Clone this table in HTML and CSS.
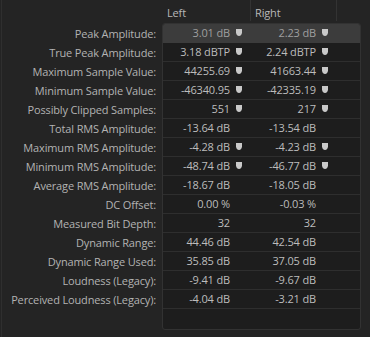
FILE: index.html
```html
<!DOCTYPE html>
<html>
<head>
<meta charset="utf-8">
<link rel="stylesheet" href="styles.css">
</head>
<body>
<div class="panel">
  <div class="header">
    <div class="hspacer"></div>
    <div class="hcell hleft">Left</div>
    <div class="hcell hright">Right</div>
  </div>
  <div class="main">
    <div class="labels">
      <div class="label">Peak Amplitude:</div>
      <div class="label">True Peak Amplitude:</div>
      <div class="label">Maximum Sample Value:</div>
      <div class="label">Minimum Sample Value:</div>
      <div class="label">Possibly Clipped Samples:</div>
      <div class="label">Total RMS Amplitude:</div>
      <div class="label">Maximum RMS Amplitude:</div>
      <div class="label">Minimum RMS Amplitude:</div>
      <div class="label">Average RMS Amplitude:</div>
      <div class="label">DC Offset:</div>
      <div class="label">Measured Bit Depth:</div>
      <div class="label">Dynamic Range:</div>
      <div class="label">Dynamic Range Used:</div>
      <div class="label">Loudness (Legacy):</div>
      <div class="label">Perceived Loudness (Legacy):</div>
    </div>
    <div class="box">
      <div class="row selected">
        <div class="cell c1"><span>3.01 dB</span><svg class="pin" viewBox="0 0 6 7"><path d="M0 0H6V3.4C6 5.3 4.6 7 3 7C1.4 7 0 5.3 0 3.4Z"/></svg></div>
        <div class="cell c2"><span>2.23 dB</span><svg class="pin" viewBox="0 0 6 7"><path d="M0 0H6V3.4C6 5.3 4.6 7 3 7C1.4 7 0 5.3 0 3.4Z"/></svg></div>
      </div>
      <div class="row">
        <div class="cell c1"><span>3.18 dBTP</span><svg class="pin" viewBox="0 0 6 7"><path d="M0 0H6V3.4C6 5.3 4.6 7 3 7C1.4 7 0 5.3 0 3.4Z"/></svg></div>
        <div class="cell c2"><span>2.24 dBTP</span><svg class="pin" viewBox="0 0 6 7"><path d="M0 0H6V3.4C6 5.3 4.6 7 3 7C1.4 7 0 5.3 0 3.4Z"/></svg></div>
      </div>
      <div class="row">
        <div class="cell c1"><span>44255.69</span><svg class="pin" viewBox="0 0 6 7"><path d="M0 0H6V3.4C6 5.3 4.6 7 3 7C1.4 7 0 5.3 0 3.4Z"/></svg></div>
        <div class="cell c2"><span>41663.44</span><svg class="pin" viewBox="0 0 6 7"><path d="M0 0H6V3.4C6 5.3 4.6 7 3 7C1.4 7 0 5.3 0 3.4Z"/></svg></div>
      </div>
      <div class="row">
        <div class="cell c1"><span>-46340.95</span><svg class="pin" viewBox="0 0 6 7"><path d="M0 0H6V3.4C6 5.3 4.6 7 3 7C1.4 7 0 5.3 0 3.4Z"/></svg></div>
        <div class="cell c2"><span>-42335.19</span><svg class="pin" viewBox="0 0 6 7"><path d="M0 0H6V3.4C6 5.3 4.6 7 3 7C1.4 7 0 5.3 0 3.4Z"/></svg></div>
      </div>
      <div class="row">
        <div class="cell c1"><span>551</span><svg class="pin" viewBox="0 0 6 7"><path d="M0 0H6V3.4C6 5.3 4.6 7 3 7C1.4 7 0 5.3 0 3.4Z"/></svg></div>
        <div class="cell c2"><span>217</span><svg class="pin" viewBox="0 0 6 7"><path d="M0 0H6V3.4C6 5.3 4.6 7 3 7C1.4 7 0 5.3 0 3.4Z"/></svg></div>
      </div>
      <div class="row">
        <div class="cell c1"><span>-13.64 dB</span><span class="gap"></span></div>
        <div class="cell c2"><span>-13.54 dB</span><span class="gap"></span></div>
      </div>
      <div class="row">
        <div class="cell c1"><span>-4.28 dB</span><svg class="pin" viewBox="0 0 6 7"><path d="M0 0H6V3.4C6 5.3 4.6 7 3 7C1.4 7 0 5.3 0 3.4Z"/></svg></div>
        <div class="cell c2"><span>-4.23 dB</span><svg class="pin" viewBox="0 0 6 7"><path d="M0 0H6V3.4C6 5.3 4.6 7 3 7C1.4 7 0 5.3 0 3.4Z"/></svg></div>
      </div>
      <div class="row">
        <div class="cell c1"><span>-48.74 dB</span><svg class="pin" viewBox="0 0 6 7"><path d="M0 0H6V3.4C6 5.3 4.6 7 3 7C1.4 7 0 5.3 0 3.4Z"/></svg></div>
        <div class="cell c2"><span>-46.77 dB</span><svg class="pin" viewBox="0 0 6 7"><path d="M0 0H6V3.4C6 5.3 4.6 7 3 7C1.4 7 0 5.3 0 3.4Z"/></svg></div>
      </div>
      <div class="row">
        <div class="cell c1"><span>-18.67 dB</span><span class="gap"></span></div>
        <div class="cell c2"><span>-18.05 dB</span><span class="gap"></span></div>
      </div>
      <div class="row">
        <div class="cell c1"><span>0.00 %</span><span class="gap"></span></div>
        <div class="cell c2"><span>-0.03 %</span><span class="gap"></span></div>
      </div>
      <div class="row">
        <div class="cell c1"><span>32</span><span class="gap"></span></div>
        <div class="cell c2"><span>32</span><span class="gap"></span></div>
      </div>
      <div class="row">
        <div class="cell c1"><span>44.46 dB</span><span class="gap"></span></div>
        <div class="cell c2"><span>42.54 dB</span><span class="gap"></span></div>
      </div>
      <div class="row">
        <div class="cell c1"><span>35.85 dB</span><span class="gap"></span></div>
        <div class="cell c2"><span>37.05 dB</span><span class="gap"></span></div>
      </div>
      <div class="row">
        <div class="cell c1"><span>-9.41 dB</span><span class="gap"></span></div>
        <div class="cell c2"><span>-9.67 dB</span><span class="gap"></span></div>
      </div>
      <div class="row">
        <div class="cell c1"><span>-4.04 dB</span><span class="gap"></span></div>
        <div class="cell c2"><span>-3.21 dB</span><span class="gap"></span></div>
      </div>
    </div>
  </div>
</div>
</body>
</html>
```
FILE: styles.css
```css
html, body {
  margin: 0;
  padding: 0;
  background: #242424;
}
body {
  width: 370px;
  height: 337px;
  overflow: hidden;
  font-family: "Open Sans", "Noto Sans", sans-serif;
  font-size: 11px;
  letter-spacing: -0.15px;
  color: #b4b4b4;
}
.panel {
  height: 337px;
  border-left: 1px solid #2f2f2f;
  margin-left: 1px;
  box-sizing: border-box;
}
.header {
  display: flex;
  height: 23px;
}
.hspacer {
  width: 161px;
}
.hcell {
  height: 21px;
  line-height: 26px;
  box-sizing: border-box;
  color: #b8b8b8;
}
.hleft {
  width: 87px;
  padding-left: 4px;
}
.hright {
  width: 87px;
  padding-left: 4px;
  border-left: 1px solid #333;
  border-right: 1px solid #333;
}
.main {
  display: flex;
}
.labels {
  width: 160px;
  padding-top: 1px;
  box-sizing: border-box;
  padding-right: 6px;
}
.label {
  height: 19px;
  line-height: 19px;
  text-align: right;
  white-space: nowrap;
  color: #b3b3b3;
}
.box {
  width: 199px;
  height: 307px;
  box-sizing: border-box;
  background: #1d1d1d;
  border: 1px solid #323232;
  border-radius: 3px;
  overflow: hidden;
}
.row {
  display: flex;
  height: 18px;
  border-bottom: 1px solid #2e2e2e;
}
.row.selected {
  background: #3c3c3c;
  border-bottom-color: #3c3c3c;
}
.row.selected .cell {
  color: #9f9f9f;
}
.cell {
  display: flex;
  align-items: center;
  justify-content: flex-end;
  padding-right: 8px;
  box-sizing: border-box;
  color: #bcbcbc;
  white-space: nowrap;
  line-height: 18px;
}
.c1 { width: 87px; }
.c2 { width: 86px; }
.pin {
  width: 6px;
  height: 7px;
  margin-left: 6px;
  margin-top: -2px;
  fill: #c9c9c9;
}
.gap {
  width: 6px;
  margin-left: 6px;
}
```
